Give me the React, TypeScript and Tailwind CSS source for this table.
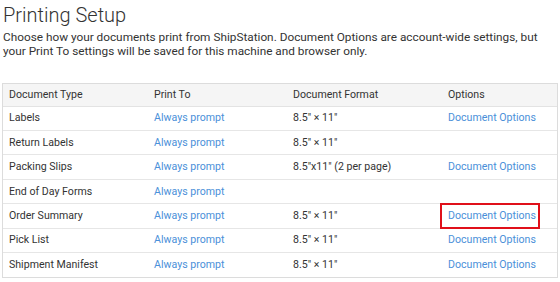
import React from "react";

type Row = {
  type: string;
  format: string;
  options: boolean;
  highlight?: boolean;
};

const rows: Row[] = [
  { type: "Labels", format: "8.5\" × 11\"", options: true },
  { type: "Return Labels", format: "8.5\" × 11\"", options: false },
  { type: "Packing Slips", format: "8.5\"x11\" (2 per page)", options: true },
  { type: "End of Day Forms", format: "", options: false },
  { type: "Order Summary", format: "8.5\" × 11\"", options: true, highlight: true },
  { type: "Pick List", format: "8.5\" × 11\"", options: true },
  { type: "Shipment Manifest", format: "8.5\" × 11\"", options: true },
];

const cols = "grid grid-cols-[145px_139px_155px_1fr]";

export default function App() {
  return (
    <div
      className="w-[560px] h-[282px] bg-white overflow-hidden text-[#333]"
      style={{ fontFamily: "Roboto, 'Liberation Sans', sans-serif" }}
    >
      <h1 className="pl-[3px] pt-[3px] text-[20px] leading-[24px] font-light">Printing Setup</h1>
      <p className="pl-[3px] mt-[2.5px] text-[11.8px] leading-[14.5px] w-[550px]">
        Choose how your documents print from ShipStation. Document Options are account-wide settings, but
        your Print To settings will be saved for this machine and browser only.
      </p>

      <div className="ml-[2px] mt-[24.5px] w-[556px] border border-[#dcdcdc] text-[10.6px]">
        <div className={`${cols} h-[22.7px] items-center bg-[#f5f5f5] border-b border-[#e3e3e3]`}>
          <div className="pl-[6px]">Document Type</div>
          <div className="pl-[6px]">Print To</div>
          <div className="pl-[6px]">Document Format</div>
          <div className="pl-[6px]">Options</div>
        </div>
        {rows.map((r, i) => (
          <div
            key={r.type}
            className={`${cols} h-[24.4px] items-center ${i < rows.length - 1 ? "border-b border-[#e6e6e6]" : ""}`}
          >
            <div className="pl-[6px]">{r.type}</div>
            <div className="pl-[6px] text-[#4a90d9]">Always prompt</div>
            <div className="pl-[6px]">{r.format}</div>
            <div className="pl-[6px] relative h-full flex items-center">
              {r.options && <span className="text-[#4a90d9]">Document Options</span>}
              {r.highlight && (
                <span className="absolute left-[-2px] top-[-1px] w-[100px] h-[26px] border-2 border-[#e0101a]" />
              )}
            </div>
          </div>
        ))}
      </div>
    </div>
  );
}
